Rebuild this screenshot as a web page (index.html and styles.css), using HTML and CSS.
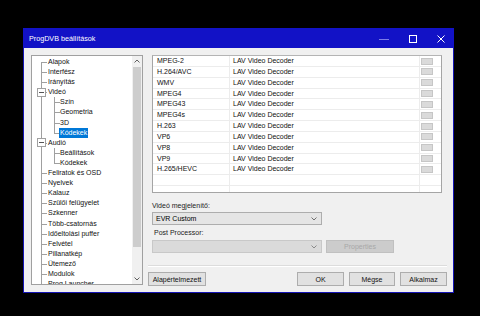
FILE: index.html
```html
<!DOCTYPE html>
<html lang="hu">
<head>
  <meta charset="UTF-8" />
  <meta name="viewport" content="width=device-width, initial-scale=1.0"/>
  <title>ProgDVB beállítások</title>
  <link rel="stylesheet" href="styles.css">
</head>
<body>
  <div class="window">
    <div class="titlebar">
      <span class="title">ProgDVB beállítások</span>
      <div class="caption-btns">
        <span class="cap"><svg width="10" height="10" viewBox="0 0 10 10"><path d="M0 5.5h10" stroke="#7c7ce8" stroke-width="1"/></svg></span>
        <span class="cap"><svg width="8" height="8" viewBox="0 0 8 8"><rect x="0.5" y="0.5" width="7" height="7" fill="none" stroke="#fff" stroke-width="1"/></svg></span>
        <span class="cap"><svg width="8" height="8" viewBox="0 0 8 8"><path d="M0.5 0.5l7 7M7.5 0.5l-7 7" stroke="#fff" stroke-width="1"/></svg></span>
      </div>
    </div>

    <div class="client">
      <div class="tree-box">
        <ul class="tree">
          <li class="node root first">Alapok</li>
          <li class="node root">Interfész</li>
          <li class="node root">Irányítás</li>
          <li class="node root parent"><span class="exp"></span>Videó</li>
          <li class="node child">Szín</li>
          <li class="node child">Geometria</li>
          <li class="node child">3D</li>
          <li class="node child last"><span class="selected">Kódekek</span></li>
          <li class="node root parent"><span class="exp"></span>Audió</li>
          <li class="node child">Beállítások</li>
          <li class="node child last">Kódekek</li>
          <li class="node root">Feliratok és OSD</li>
          <li class="node root">Nyelvek</li>
          <li class="node root">Kalauz</li>
          <li class="node root">Szülői felügyelet</li>
          <li class="node root">Szkenner</li>
          <li class="node root">Több-csatornás</li>
          <li class="node root">Időeltolási puffer</li>
          <li class="node root">Felvétel</li>
          <li class="node root">Pillanatkép</li>
          <li class="node root">Ütemező</li>
          <li class="node root">Modulok</li>
          <li class="node root">Prog Launcher</li>
        </ul>
        <div class="vscroll">
          <div class="arrow"><svg width="6" height="4" viewBox="0 0 6 4"><path d="M0.5 3.5L3 1l2.5 2.5" fill="none" stroke="#606060"/></svg></div>
          <div class="track"><div class="thumb"></div></div>
          <div class="arrow"><svg width="6" height="4" viewBox="0 0 6 4"><path d="M0.5 0.5L3 3l2.5-2.5" fill="none" stroke="#606060"/></svg></div>
        </div>
      </div>

      <div class="right">
        <div class="panel">
          <div class="codec-list">
            <div class="row"><span class="c1">MPEG-2</span><span class="c2">LAV Video Decoder</span><span class="c3"><i class="mini"></i></span></div>
            <div class="row"><span class="c1">H.264/AVC</span><span class="c2">LAV Video Decoder</span><span class="c3"><i class="mini"></i></span></div>
            <div class="row"><span class="c1">WMV</span><span class="c2">LAV Video Decoder</span><span class="c3"><i class="mini"></i></span></div>
            <div class="row"><span class="c1">MPEG4</span><span class="c2">LAV Video Decoder</span><span class="c3"><i class="mini"></i></span></div>
            <div class="row"><span class="c1">MPEG43</span><span class="c2">LAV Video Decoder</span><span class="c3"><i class="mini"></i></span></div>
            <div class="row"><span class="c1">MPEG4s</span><span class="c2">LAV Video Decoder</span><span class="c3"><i class="mini"></i></span></div>
            <div class="row"><span class="c1">H.263</span><span class="c2">LAV Video Decoder</span><span class="c3"><i class="mini"></i></span></div>
            <div class="row"><span class="c1">VP6</span><span class="c2">LAV Video Decoder</span><span class="c3"><i class="mini"></i></span></div>
            <div class="row"><span class="c1">VP8</span><span class="c2">LAV Video Decoder</span><span class="c3"><i class="mini"></i></span></div>
            <div class="row"><span class="c1">VP9</span><span class="c2">LAV Video Decoder</span><span class="c3"><i class="mini"></i></span></div>
            <div class="row"><span class="c1">H.265/HEVC</span><span class="c2">LAV Video Decoder</span><span class="c3"><i class="mini"></i></span></div>
            <div class="row"></div>
          </div>

          <div class="field-label">Videó megjelenítő:</div>
          <div class="combo">EVR Custom<svg width="6" height="4" viewBox="0 0 6 4"><path d="M0.5 0.5L3 3l2.5-2.5" fill="none" stroke="#707070"/></svg></div>

          <div class="field-label second">Post Processor:</div>
          <div class="combo-row">
            <div class="combo disabled"><svg width="6" height="4" viewBox="0 0 6 4"><path d="M0.5 0.5L3 3l2.5-2.5" fill="none" stroke="#8a8a8a"/></svg></div>
            <button class="btn props" disabled>Properties</button>
          </div>
        </div>

        <div class="buttons">
          <button class="btn defaults">Alapértelmezett</button>
          <span class="spacer"></span>
          <button class="btn ok">OK</button>
          <button class="btn cancel">Mégse</button>
          <button class="btn apply">Alkalmaz</button>
        </div>
      </div>
    </div>
  </div>
</body>
</html>
```

FILE: styles.css
```css
body {
  margin: 0;
  width: 480px;
  height: 316px;
  overflow: hidden;
  background: #000;
  font-family: "Liberation Sans", Arial, sans-serif;
  font-size: 7px;
  color: #000;
}

.window {
  margin: 28px 0 0 23px;
  width: 431px;
  height: 265px;
  box-sizing: border-box;
  border: 1px solid #1414b4;
  background: #f0f0f0;
}

.titlebar {
  height: 19px;
  margin: -1px -1px 0 -1px;
  padding-top: 1px;
  background: #1212c6;
  display: flex;
  align-items: center;
}
.title { color: #fff; padding-left: 6px; font-size: 7.2px; }
.caption-btns { margin-left: auto; display: flex; height: 100%; }
.cap { width: 29px; display: flex; align-items: center; justify-content: center; }
.cap:last-child { width: 27px; }

.client {
  display: flex;
  gap: 5px;
  padding: 7px 6px 0 7px;
}

/* tree view */
.tree-box {
  width: 112px;
  height: 230px;
  box-sizing: border-box;
  border: 1px solid #a0a0a0;
  background: #fff;
  display: flex;
  overflow: hidden;
}
.tree {
  flex: 1;
  list-style: none;
  margin: 0;
  padding: 1px 0 0 0;
  overflow: hidden;
}
.node {
  height: 10.1px;
  line-height: 10.1px;
  white-space: nowrap;
  display: flex;
  align-items: center;
  color: #111;
}
.root {
  padding-left: 16px;
  background:
    linear-gradient(#a0a0a0, #a0a0a0) 9px 0 / 1px 100% no-repeat,
    linear-gradient(#a0a0a0, #a0a0a0) 9px 5px / 6px 1px no-repeat;
}
.root.first {
  background:
    linear-gradient(#a0a0a0, #a0a0a0) 9px 5px / 1px 6px no-repeat,
    linear-gradient(#a0a0a0, #a0a0a0) 9px 5px / 6px 1px no-repeat;
}
.root.parent { padding-left: 5px; }
.exp {
  width: 7px;
  height: 7px;
  border: 1px solid #a0a0a0;
  background: linear-gradient(#555, #555) center / 5px 1px no-repeat, #fff;
  margin-right: 2px;
}
.child {
  padding-left: 28px;
  background:
    linear-gradient(#a0a0a0, #a0a0a0) 9px 0 / 1px 100% no-repeat,
    linear-gradient(#a0a0a0, #a0a0a0) 22px 0 / 1px 100% no-repeat,
    linear-gradient(#a0a0a0, #a0a0a0) 22px 5px / 6px 1px no-repeat;
}
.child.last {
  background:
    linear-gradient(#a0a0a0, #a0a0a0) 9px 0 / 1px 100% no-repeat,
    linear-gradient(#a0a0a0, #a0a0a0) 22px 0 / 1px 6px no-repeat,
    linear-gradient(#a0a0a0, #a0a0a0) 22px 5px / 6px 1px no-repeat;
}
.selected {
  background: #0078d7;
  color: #fff;
  padding: 0 1px;
  margin-left: -1px;
}

.vscroll {
  width: 10px;
  background: #f0f0f0;
  display: flex;
  flex-direction: column;
}
.arrow { height: 10px; display: flex; align-items: center; justify-content: center; }
.track { flex: 1; padding-top: 1px; }
.thumb { height: 180px; margin: 0 1px; background: #cdcdcd; }

/* right side */
.right {
  width: 299px;
  display: flex;
  flex-direction: column;
}
.panel {
  padding: 0 5px 12px 4px;
  border-bottom: 1px solid #dcdcdc;
  box-shadow: 0 1px 0 #fff;
}
.codec-list {
  height: 138px;
  box-sizing: border-box;
  border: 1px solid #a5a5a5;
  border-top-color: #b4b4b4;
  background:
    linear-gradient(#ececec, #ececec) 76px 0 / 1px 100% no-repeat,
    linear-gradient(#ececec, #ececec) 266px 0 / 1px 100% no-repeat,
    #fff;
  overflow: hidden;
}
.row {
  height: 10.85px;
  box-sizing: border-box;
  border-bottom: 1px solid #ececec;
  display: grid;
  grid-template-columns: 77px 190px 1fr;
  align-items: center;
  line-height: 10px;
  color: #111;
}
.c1 { padding-left: 4px; }
.c2 { padding-left: 3px; }
.c3 { display: flex; padding-left: 1px; }
.mini {
  width: 12px;
  height: 7px;
  box-sizing: border-box;
  background: #dadada;
  border: 1px solid #c6c6c6;
}

.field-label { margin-top: 8px; height: 10px; line-height: 10px; color: #222; }
.field-label.second { margin-top: 3px; padding-left: 2px; }

.combo {
  margin-top: 1px;
  width: 170px;
  height: 13px;
  box-sizing: border-box;
  border: 1px solid #adadad;
  background: #e5e5e5;
  display: flex;
  align-items: center;
  justify-content: space-between;
  padding: 0 4px 0 3px;
}
.combo-row { display: flex; gap: 4px; margin-top: 2px; }
.combo-row .combo { margin-top: 0; justify-content: flex-end; }
.combo.disabled { background: #dadada; border-color: #c8c8c8; }

.btn {
  height: 14px;
  box-sizing: border-box;
  border: 1px solid #adadad;
  background: #e1e1e1;
  font-family: inherit;
  font-size: 7px;
  color: #111;
  padding: 0;
}
.btn.props {
  width: 68px;
  height: 13px;
  background: #cccccc;
  border-color: #c0c0c0;
  color: #a8a8a8;
}

.buttons {
  display: flex;
  gap: 5px;
  margin-top: 6px;
}
.spacer { flex: 1; }
.defaults { width: 58px; }
.ok { width: 47px; }
.cancel { width: 46px; }
.apply { width: 47px; }
```
